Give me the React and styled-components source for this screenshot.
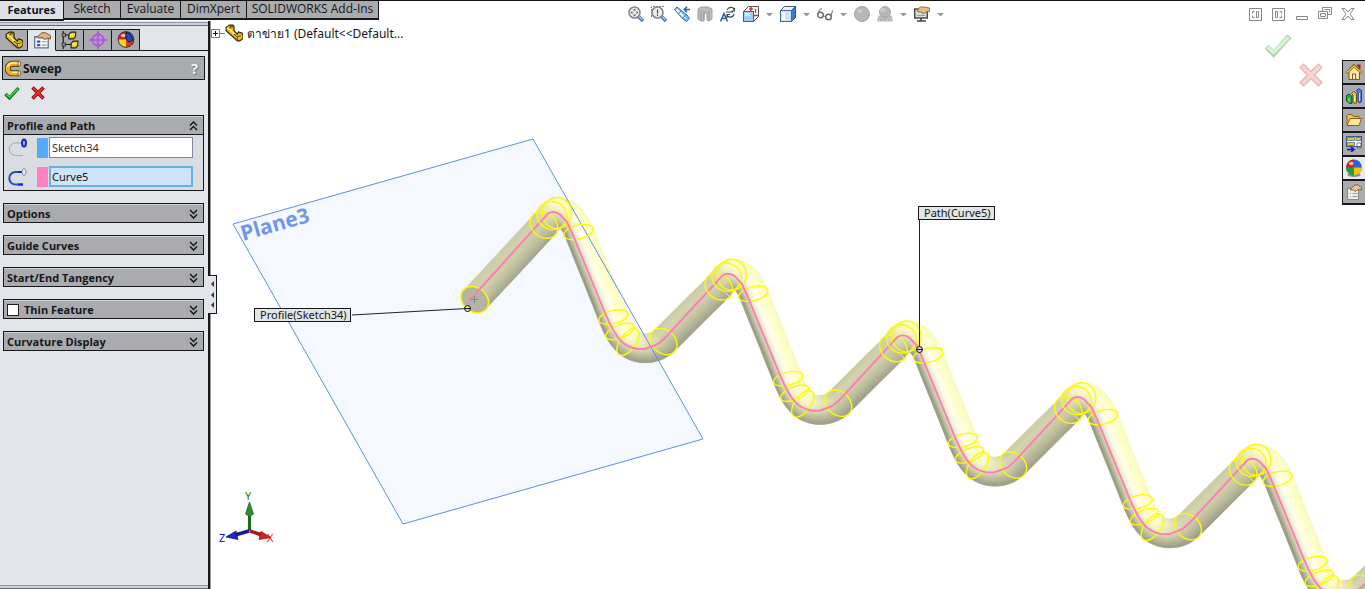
import React from "react";
import styled, { createGlobalStyle, css } from "styled-components";

const tabs = [
  { name: "Features", width: 64 },
  { name: "Sketch", width: 57 },
  { name: "Evaluate", width: 60 },
  { name: "DimXpert", width: 66 },
  { name: "SOLIDWORKS Add-Ins", width: 132 },
];

const groups = ["Options", "Guide Curves", "Start/End Tangency"];

/* ---------- icons ---------- */

const Icon = ({ size = 16, children, ...rest }) => (
  <svg width={size} height={size} viewBox="0 0 16 16" fill="none" aria-hidden="true" {...rest}>
    {children}
  </svg>
);

const PartIcon = () => (
  <Icon size={18}>
    <path d="M1 3l3-2h3l1 1v4l3 3 1-2 3 1 1 2v3l-3 2h-2L1 6z" fill="#e8b818" stroke="#2a2200" strokeWidth="1" />
    <path d="M2 3.500l2 1 7 7.500 2-1" stroke="#fff3a0" strokeWidth="1.200" />
    <path d="M4 4l1-1.500h2M8 9l3 2.500 3-1M11 12v2" stroke="#5a4600" />
  </Icon>
);

const PropertyIcon = () => (
  <Icon size={18}>
    <rect x="1.500" y="5" width="12" height="10" fill="#f4f6fb" stroke="#54688c" />
    <path d="M2 6h11" stroke="#7d9bd0" />
    <path d="M4 9h2v1H4zM4 12h2v1H4z" stroke="#3d5d9a" />
    <path d="M8 9.500h4M8 12.500h4" stroke="#8a94a8" />
    <path d="M4 5l4-3.500h3L15.500 4v3L13 6.500 10 7.500 9 6H5z" fill="#e2b184" stroke="#7c4a20" strokeWidth=".8" />
  </Icon>
);

const ConfigIcon = () => (
  <Icon size={18}>
    <path d="M2 0v16M2 3.500h5M2 12h7" stroke="#111" />
    <path d="M1 2h3v3H1zM1 10.500h3v3H1z" fill="#888" stroke="#222" strokeWidth=".6" />
    <path d="M7 3l2-2h4v4l-2 2H7zM9 11l2-2h4v4l-2 2H9z" fill="#f0d020" stroke="#222" />
    <path d="M8 3.500h3M10 11.500h3" stroke="#fff8b0" />
  </Icon>
);

const TargetIcon = () => (
  <Icon size={18}>
    <circle cx="8" cy="8" r="5" stroke="#b44be0" strokeWidth="1.400" />
    <path d="M8 0v16M0 8h16" stroke="#b44be0" strokeWidth="1.400" />
    <circle cx="8" cy="8" r="2" stroke="#c86cf0" />
  </Icon>
);

const BallIcon = ({ plain }) => (
  <Icon size={18}>
    {plain && <ellipse cx="8" cy="14" rx="6" ry="2" fill="#8c8c8c" />}
    <circle cx="8" cy="7.500" r="7" fill="#2e63d4" />
    <path d="M8 7.500V.5A7 7 0 0 0 1 7.500z" fill="#e02020" />
    <path d="M8 7.500H1a7 7 0 0 0 7 7z" fill={plain ? "#1f9e3a" : "#f4d415"} />
    <path d="M8 7.500h7a7 7 0 0 1-7 7z" fill={plain ? "#f4c415" : "#d43a20"} />
    {!plain && <path d="M8 1l4 2 2 5-3 2-3-3z" fill="#2448b4" stroke="#111" strokeWidth=".7" />}
    {!plain && <circle cx="8" cy="7.500" r="7" stroke="#222" strokeWidth=".7" />}
    <ellipse cx="5.500" cy="4" rx="2" ry="1.500" fill="#ffffff" opacity=".7" />
  </Icon>
);

const SweepIcon = () => (
  <Icon size={17}>
    <path d="M13 3.500H7a4.500 4.500 0 0 0 0 9h6" stroke="#4a3200" strokeWidth="5.600" />
    <path d="M13 3.500H7a4.500 4.500 0 0 0 0 9h6" stroke="#f0b020" strokeWidth="4" />
    <path d="M12 2.800H7A5 5 0 0 0 2.500 6.500M6.500 11.500h6" stroke="#fff0a0" strokeWidth="1.300" />
    <ellipse cx="13.500" cy="3.500" rx="1.300" ry="2.300" fill="#ffe27a" stroke="#4a3200" strokeWidth=".6" />
    <ellipse cx="13.500" cy="12.500" rx="1.300" ry="2.300" fill="#ffe27a" stroke="#4a3200" strokeWidth=".6" />
  </Icon>
);

const CheckIcon = ({ size = 16, faded }) => (
  <Icon size={size} opacity={faded ? 0.4 : 1}>
    <path d="M1.500 9l4 4L14.500 3" stroke={faded ? "#4c8a4c" : "#0b5c12"} strokeWidth="3.200" />
    <path d="M2 9.300l3.500 3L14 3.500" stroke={faded ? "#8df08d" : "#2cd436"} strokeWidth="1.800" />
  </Icon>
);

const CrossIcon = ({ size = 16, faded }) => (
  <Icon size={size} opacity={faded ? 0.4 : 1}>
    <path d="M2.500 2.500l11 11M13.500 2.500l-11 11" stroke={faded ? "#b05050" : "#7c0c0c"} strokeWidth="3.600" />
    <path d="M3 3l10 10M13 3L3 13" stroke={faded ? "#ff9090" : "#ee2a2a"} strokeWidth="2" />
  </Icon>
);

const ProfileIcon = ({ path }) => (
  <svg width="20" height="20" viewBox="0 0 20 20" fill="none" aria-hidden="true">
    <path
      d="M15 5H7.500a6 6 0 0 0 0 12.500H15"
      stroke={path ? "#2a52a8" : "#a9abb0"}
      strokeWidth={path ? 2 : 1}
    />
    {path && <path d="M10 5h5M10 17.500h5" stroke="#1522d8" strokeWidth="2" />}
    <ellipse
      cx="16"
      cy="5"
      rx="2"
      ry="3.500"
      fill={path ? "#e8eaf0" : "#aab4f0"}
      stroke={path ? "#8a8c92" : "#1e2ca8"}
      strokeWidth={path ? 1 : 2}
    />
  </svg>
);

const Chevrons = ({ up }) => (
  <svg width="9" height="10" viewBox="0 0 9 10" fill="none" aria-hidden="true">
    <path
      d={up ? "M1 4.500L4.500 1 8 4.500M1 9l3.500-3.500L8 9" : "M1 1l3.500 3.500L8 1M1 5.500L4.500 9 8 5.500"}
      stroke="#111"
      strokeWidth="1.300"
    />
  </svg>
);

const ZoomFitIcon = ({ area }) => (
  <Icon>
    {area && <path d="M.5 11V.5h13" stroke="#777" strokeDasharray="2 1" />}
    <path d="M10.500 10.500l4.500 4.500" stroke="#3f78b8" strokeWidth="3.400" />
    <path d="M11 10.500l3.500 3.500" stroke="#9fd0ff" strokeWidth="1.200" />
    <circle cx="6.500" cy="6.500" r="5.500" fill="#eceef2" stroke="#85878d" strokeWidth="1.600" />
    {area ? (
      <path d="M6.500 3.500v4M6.500 8.500V10" stroke="#444" strokeWidth="1.200" />
    ) : (
      <path d="M6.500 2.500l1.600 2H4.900zM6.500 10.500l1.600-2H4.900zM2.500 6.500l2-1.600v3.200zM10.500 6.500l-2-1.600v3.200z" fill="#555" />
    )}
  </Icon>
);

const PreviousViewIcon = () => (
  <Icon>
    <path d="M.5 3.500L3 1l10 8 2.500 3.500-3 3L9 13z" fill="#7cbcf4" stroke="#3a70ac" />
    <path d="M2.500 3.500l8.500 8.500" stroke="#f0f8ff" strokeWidth="2" />
    <path d="M4.500 7.500l3-3M8.500 12.500l3.500-4" stroke="#3a70ac" />
    <path d="M16 3.500h-5M13 .8L10.300 3.500 13 6.200" stroke="#2a62b4" strokeWidth="1.600" />
  </Icon>
);

const SectionIcon = () => (
  <Icon>
    <path d="M1 3l3-2h7l4 2v10l-3 2-2-1V7H7v8H4l-3-2z" fill="#bdbdbd" stroke="#a2a2a2" />
    <path d="M4 4v11M7 5v9M12 5v10" stroke="#989898" />
  </Icon>
);

const DynamicViewIcon = () => (
  <Icon>
    <path d="M.5 15.500L4 7.500l3.500 8M2 12.500h4" stroke="#2860b8" strokeWidth="1.600" />
    <path d="M7 4c2-4 7-3 7 0M14.500 2v3h-3M14 8c-1 4-6 4-7 1M7 12V8.500h3M6 6h7" stroke="#444" strokeWidth="1.100" />
  </Icon>
);

const OrientationIcon = () => (
  <Icon>
    <path d="M.5 5.500l5-5h10v10l-5 5" fill="#f8f8f8" stroke="#555" />
    <rect x=".5" y="5.500" width="10" height="10" fill="#9ecdf8" stroke="#2f64a8" />
    <path d="M2 7h5v3H2z" fill="#d2e9ff" />
    <path d="M8 1v4M12.500 3v4M11 9.500h4M6 3h4" stroke="#d83030" strokeWidth="1.300" />
  </Icon>
);

const DisplayIcon = () => (
  <Icon>
    <path d="M.5 4.500l4-4h11v11l-4 4H.5z" fill="#e8f3ff" stroke="#4a5c7c" />
    <path d="M11.500 4.500l4-4v11l-4 4z" fill="#3c7cd0" stroke="#2a4c88" />
    <path d="M.5 4.500h11v11H.5z" fill="#cfe4fc" stroke="#3c68ac" />
    <path d="M2 6h3v8H2z" fill="#fff" />
  </Icon>
);

const GlassesIcon = () => (
  <Icon>
    <circle cx="3.500" cy="9" r="2.800" stroke="#666" strokeWidth="1.400" />
    <circle cx="11.500" cy="11" r="2.800" stroke="#666" strokeWidth="1.400" />
    <path d="M6 10l3 .5M1 7.500C2 4 3 3 5 2.500M14 9.500c1-3 1-4 2-5" stroke="#777" strokeWidth="1.200" />
  </Icon>
);

const GrayBallIcon = ({ scene }) => (
  <Icon>
    {scene && <path d="M1.500 9.500h13l1.500 6H0z" fill="#b4b4b4" />}
    {scene && <path d="M2 11.500h12M1 14h14" stroke="#d4d4d4" strokeDasharray="2 2" />}
    <circle cx="8" cy={scene ? 6 : 8} r={scene ? 5.500 : 7.500} fill="#b6b6b6" stroke="#a6a6a6" />
    <ellipse cx="6" cy={scene ? 4 : 5} rx="3" ry="2" fill="#c8c8c8" />
  </Icon>
);

const MonitorIcon = () => (
  <Icon>
    <rect x=".7" y="3" width="12.600" height="9" fill="#d8dee8" stroke="#444" strokeWidth="1.400" />
    <path d="M3 9.500h8" stroke="#8aa0c0" />
    <path d="M3 15h9M7 12v3" stroke="#444" strokeWidth="1.600" />
    <path d="M3 5l3-4h4l5.500 1v3.500L12 6l-3 2-1-2H4z" fill="#e8bc84" stroke="#8a5a24" strokeWidth=".8" />
  </Icon>
);

const WindowIcon = ({ kind }) => (
  <svg width="14" height="14" viewBox="0 0 14 14" fill="none" stroke="#85878f" aria-hidden="true">
    {kind === "left" && <path d="M.5 1.500h12v12H.5zM5.500 4.500h-2v2M3.500 8.500v2h2M7.500 4.500h2v6h-2z" />}
    {kind === "right" && <path d="M.5 1.500h12v12H.5zM7.500 4.500h2v2M9.500 8.500v2h-2M3.500 4.500h2v6h-2z" />}
    {kind === "minimize" && <path d="M1.500 9.500h11v3h-11z" />}
    {kind === "restore" && <path d="M4.500 4V.5h9v7H10M.5 4.500h9v7h-9zM2.500 6.500h5v3h-5zM6.500 2.500h5v3" />}
    {kind === "close" && <path d="M1 1.500h3l3 3.500 3-3.500h3L9 7l4 5.500h-3L7 9l-3 3.500H1L5 7z" />}
  </svg>
);

const HomeIcon = () => (
  <Icon>
    <path d="M11 1.500h2.500V5" stroke="#b02020" strokeWidth="2" />
    <path d="M3 8v7.500h10.500V8L8 3z" fill="#ffe9a0" stroke="#7c5a10" />
    <path d="M.5 9L8 1.500 15.500 9" stroke="#8c6410" strokeWidth="2.600" />
    <path d="M1 8.500L8 2l7 6.500" stroke="#f4c53a" strokeWidth="1.200" />
    <path d="M6.500 10h3v5.500h-3z" fill="#fff8dc" stroke="#7c5a10" />
  </Icon>
);

const LibraryIcon = () => (
  <Icon>
    <path d="M.5 7.500L3 6l3 2.500v7H4L.5 13z" fill="#24b040" stroke="#0e5820" />
    <path d="M5.500 5.500l2-2 3 2V15l-1.500.5-2-1.500V7z" fill="#f0c830" stroke="#705008" />
    <path d="M10.500 2.500l2-2 3 2V13L14 15l-2-1.500V5z" fill="#4c82e0" stroke="#203c88" />
    <path d="M3 10v4M8.500 8v5M13.500 5v8" stroke="#fff" opacity=".7" />
  </Icon>
);

const FolderIcon = () => (
  <Icon>
    <path d="M1 13V3.500l1-1h4l1.500 2H13V7" fill="#f4c650" stroke="#8a6010" />
    <path d="M1 13.500L4 6.500h11.500L13 13.500z" fill="#ffe79a" stroke="#8a6010" />
  </Icon>
);

const PaletteIcon = () => (
  <Icon>
    <rect x=".5" y=".5" width="15" height="10" fill="#fff" stroke="#3a5a90" />
    <path d="M2 3h6M2 8h6M10 3h4" stroke="#f0cc10" strokeWidth="2.400" />
    <path d="M1.500 1.500h7v3h-7zM1.500 6.500h7v3h-7zM10 1.500h4.500v3H10zM11 7h4v5h-4z" stroke="#4c6488" strokeWidth=".8" />
    <path d="M1 13.500h6M5 11l3 2.500L5 16" stroke="#1010c8" strokeWidth="1.600" />
  </Icon>
);

const PropertiesIcon = () => (
  <Icon>
    <path d="M1.500 4.500h11v11h-11z" fill="#f0f0ea" stroke="#888" />
    <path d="M4 9.500h1M4 12.500h1M6.500 9.500h5M6.500 12.500h5" stroke="#999" />
    <path d="M4 6l4-4.500 3-1 4.500 3V6L12 5.500 9 7.500 8 6z" fill="#e8c49c" stroke="#7c5028" strokeWidth=".8" />
  </Icon>
);

const hudItems = [
  { label: "Zoom to Fit", icon: <ZoomFitIcon /> },
  { label: "Zoom to Area", icon: <ZoomFitIcon area /> },
  { label: "Previous View", icon: <PreviousViewIcon /> },
  { label: "Section View", icon: <SectionIcon /> },
  { label: "Dynamic Views", icon: <DynamicViewIcon /> },
  { label: "View Orientation", icon: <OrientationIcon />, menu: true },
  { label: "Display Style", icon: <DisplayIcon />, menu: true },
  { label: "Hide/Show Items", icon: <GlassesIcon />, menu: true },
  { label: "Edit Appearance", icon: <GrayBallIcon /> },
  { label: "Apply Scene", icon: <GrayBallIcon scene />, menu: true },
  { label: "View Settings", icon: <MonitorIcon />, menu: true },
];

const managerTabs = [
  { label: "FeatureManager", icon: <PartIcon /> },
  { label: "PropertyManager", icon: <PropertyIcon />, active: true },
  { label: "ConfigurationManager", icon: <ConfigIcon /> },
  { label: "DimXpertManager", icon: <TargetIcon /> },
  { label: "DisplayManager", icon: <BallIcon /> },
];

const taskTabs = [
  { label: "Resources", icon: <HomeIcon /> },
  { label: "Design Library", icon: <LibraryIcon /> },
  { label: "File Explorer", icon: <FolderIcon /> },
  { label: "View Palette", icon: <PaletteIcon /> },
  { label: "Appearances", icon: <BallIcon plain />, active: true },
  { label: "Custom Properties", icon: <PropertiesIcon /> },
];

/* ---------- swept tube ---------- */

const STEP_X = 174.8;
const STEP_Y = 61.7;
const RADIUS = 14.5;
const BANDS = 14;

// shades across the tube, from the left hand side of travel to the right
const RAMPS = {
  rise: ["#cbcba8", "#d0d0aa", "#cdcda8", "#bdbd9c", "#a3a38c"],
  peak: ["#f8f8c6", "#fdfdca", "#efefc0", "#cfcfa8", "#adad92"],
  fall: ["#f8f8c0", "#ffffc8", "#fffff0", "#dfdfb8", "#90907e"],
  turn: ["#f8f8c2", "#ffffcc", "#f4f4c4", "#c8c8a2", "#9c9c88"],
  low: ["#c8c8a2", "#d4d4ae", "#cbcba6", "#b4b496", "#9a9a86"],
};

const wave = [
  { p: [544, 225], c: [[549, 219], [553, 212], [558, 212]], from: "rise", to: "peak", n: 12 },
  { p: [558, 212], c: [[567, 212], [574, 220], [579, 232]], from: "peak", to: "fall", n: 14 },
  { p: [579, 232], c: [[590, 260], [602, 289], [613, 317]], from: "fall", to: "fall", n: 4 },
  { p: [613, 317], c: [[617, 327], [621, 336], [628, 342]], from: "fall", to: "turn", n: 8 },
  { p: [628, 342], c: [[638, 351], [655, 350], [664, 341]], from: "turn", to: "low", n: 14 },
  { p: [664, 341], c: [[682, 323], [700, 305], [718.8, 286.7]], from: "low", to: "rise", n: 6 },
];

const lead = [{ p: [474.7, 299.7], c: [[498, 275], [521, 250], [544, 225]], from: "rise", to: "rise", n: 2 }];

const rgb = (hex) => [1, 3, 5].map((i) => parseInt(hex.slice(i, i + 2), 16));
const mix = (a, b, t) => a.map((v, i) => v + (b[i] - v) * t);

const rampAt = (name, t) => {
  const ramp = RAMPS[name];
  const pos = t * (ramp.length - 1);
  const i = Math.min(Math.floor(pos), ramp.length - 2);
  return mix(rgb(ramp[i]), rgb(ramp[i + 1]), pos - i);
};

const curveAt = ({ p, c }, t) => {
  const pts = [p, ...c];
  const u = 1 - t;
  const w = [u * u * u, 3 * u * u * t, 3 * u * t * t, t * t * t];
  const d = [-3 * u * u, 3 * u * u - 6 * u * t, 6 * u * t - 3 * t * t, 3 * t * t];
  const sum = (k, axis) => k.reduce((acc, v, i) => acc + v * pts[i][axis], 0);
  const dx = sum(d, 0);
  const dy = sum(d, 1);
  const len = Math.hypot(dx, dy);
  return { x: sum(w, 0), y: sum(w, 1), nx: dy / len, ny: -dx / len };
};

const buildTube = (pieces) => {
  const quads = [];
  pieces.forEach((piece) => {
    for (let i = 0; i < piece.n; i++) {
      const a = curveAt(piece, i / piece.n);
      const b = curveAt(piece, (i + 1) / piece.n);
      const blend = (i + 0.5) / piece.n;
      for (let j = 0; j < BANDS; j++) {
        const t = (j + 0.5) / BANDS;
        const r0 = RADIUS * (1 - (2 * j) / BANDS);
        const r1 = RADIUS * (1 - (2 * (j + 1)) / BANDS);
        const color = mix(rampAt(piece.from, t), rampAt(piece.to, t), blend).map(Math.round);
        const at = (s, r) => `${(s.x + s.nx * r).toFixed(1)},${(s.y + s.ny * r).toFixed(1)}`;
        quads.push({
          points: [at(a, r0), at(b, r0), at(b, r1), at(a, r1)].join(" "),
          color: `rgb(${color.join(",")})`,
        });
      }
    }
  });
  return quads;
};

const rings = [
  [544, 225, 15, 12, 40],
  [552, 215.5, 15, 14, 20],
  [557, 213, 14.5, 15.5, 0],
  [578.5, 232, 15, 7, -14],
  [613.5, 317, 15, 6.5, -14],
  [620, 331.5, 15, 6.5, -22],
  [628, 342, 15.5, 8, -54],
  [663.5, 341.5, 15, 11.5, 42],
];

const Tube = ({ pieces }) =>
  buildTube(pieces).map((q, i) => (
    <polygon key={i} points={q.points} fill={q.color} stroke={q.color} strokeWidth=".8" />
  ));

const copies = [0, 1, 2, 3, 4];

const Scene = () => (
  <SceneSvg aria-hidden="true">
    <defs>
      <g id="tube">
        <Tube pieces={wave} />
      </g>
      <g id="marks" fill="none">
        {rings.map(([cx, cy, rx, ry, turn]) => (
          <ellipse
            key={cx}
            cx={cx}
            cy={cy}
            rx={rx}
            ry={ry}
            transform={`rotate(${turn} ${cx} ${cy})`}
            stroke="#fdfb00"
            strokeWidth="1.400"
          />
        ))}
        <path
          d="M543 219L548 213.500Q554 210 560 214.500L567 222 573 235 605 313Q614 334 621 341 627 347 637 349H645L658 344 664 339 717.800 280.700"
          stroke="#ff7bb8"
          strokeWidth="1.900"
        />
      </g>
    </defs>
    {/* the viewport starts right of the panel and below the tabs */}
    <g transform="translate(-210 -21)">
      <polygon points="233,224 533,139 703,439 403,524" fill="#f5f8ff" />
      <PlaneName x="243" y="241" transform="rotate(-16 243 241)">
        Plane3
      </PlaneName>
      <Tube pieces={lead} />
      <ellipse cx="474.700" cy="299.700" rx="15" ry="12" transform="rotate(40 474.700 299.700)" fill="#b4b4a0" />
      {copies.map((k) => (
        <use key={k} href="#tube" x={k * STEP_X} y={k * STEP_Y} />
      ))}
      <polygon points="233,224 533,139 703,439 403,524" fill="none" stroke="#5c8cf0" />
      <ellipse
        cx="474.700"
        cy="299.700"
        rx="15"
        ry="12"
        transform="rotate(40 474.700 299.700)"
        fill="none"
        stroke="#fdfb00"
        strokeWidth="1.500"
      />
      <path d="M469 301L543 219" stroke="#ff7bb8" strokeWidth="1.900" />
      {copies.map((k) => (
        <use key={k} href="#marks" x={k * STEP_X} y={k * STEP_Y} />
      ))}
      <path d="M471 299.500h7M474.500 296v7" stroke="#5a94a4" />
      <path d="M352 315L467 308.500M919.500 220V349" stroke="#222" />
      <g stroke="#111" fill="#d8d8d8">
        <circle cx="467.500" cy="308.500" r="3" />
        <circle cx="919.500" cy="349.500" r="3" />
        <path d="M465 308.500h5M917 349.500h5" />
      </g>
      <path d="M249.500 531v-16" stroke="#1c6c1c" strokeWidth="3" />
      <path d="M249.500 502l4 12-4 2.500-4-2.500z" fill="#2f8f2f" stroke="#155015" strokeWidth=".7" />
      <path d="M250 531l12 4" stroke="#b01818" strokeWidth="3.500" />
      <path d="M271 537.500l-12 2 2-8z" fill="#d82020" stroke="#801010" strokeWidth=".7" />
      <path d="M249 531l-14 4" stroke="#1818a8" strokeWidth="3.500" />
      <path d="M226 537l10-6 2 8.500z" fill="#2424cc" stroke="#101070" strokeWidth=".7" />
      <AxisName x="245" y="500" fill="#128012">Y</AxisName>
      <AxisName x="267" y="542" fill="#f01818">X</AxisName>
      <AxisName x="219" y="542" fill="#1010e0">Z</AxisName>
    </g>
  </SceneSvg>
);

const Group = ({ title, check }) => (
  <GroupBox>
    <GroupHead>
      {check ? (
        <CheckLabel>
          <input type="checkbox" />
          {title}
        </CheckLabel>
      ) : (
        <span>{title}</span>
      )}
      <PlainButton aria-label={`Expand ${title}`}>
        <Chevrons />
      </PlainButton>
    </GroupHead>
  </GroupBox>
);

const App = () => {
  return (
    <Page>
      <GlobalStyle />
      <Header>
        <TabBar>
          {tabs.map((tab, i) => (
            <Tab key={tab.name} $width={tab.width} $active={i === 0}>
              {tab.name}
            </Tab>
          ))}
        </TabBar>
        <Hud>
          {hudItems.map((item) => (
            <React.Fragment key={item.label}>
              <PlainButton aria-label={item.label}>{item.icon}</PlainButton>
              {item.menu && (
                <PlainButton aria-label={`${item.label} menu`}>
                  <Caret />
                </PlainButton>
              )}
            </React.Fragment>
          ))}
        </Hud>
        <WindowButtons>
          {["left", "right", "minimize", "restore", "close"].map((kind) => (
            <PlainButton key={kind} aria-label={kind}>
              <WindowIcon kind={kind} />
            </PlainButton>
          ))}
        </WindowButtons>
      </Header>
      <Body>
        <Panel>
          <Rule />
          <ManagerTabs>
            {managerTabs.map((tab) => (
              <ManagerTab key={tab.label} aria-label={tab.label} $active={tab.active}>
                {tab.icon}
              </ManagerTab>
            ))}
          </ManagerTabs>
          <Title>
            <SweepIcon />
            <h1>Sweep</h1>
            <HelpButton aria-label="Help">?</HelpButton>
          </Title>
          <Actions>
            <PlainButton aria-label="OK">
              <CheckIcon />
            </PlainButton>
            <PlainButton aria-label="Cancel">
              <CrossIcon />
            </PlainButton>
          </Actions>
          <Groups>
            <GroupBox>
              <GroupHead>
                <span>Profile and Path</span>
                <PlainButton aria-label="Collapse Profile and Path">
                  <Chevrons up />
                </PlainButton>
              </GroupHead>
              <Fields>
                <Field>
                  <ProfileIcon />
                  <Swatch $color="#55aaff" />
                  <input aria-label="Profile" defaultValue="Sketch34" />
                </Field>
                <Field $active>
                  <ProfileIcon path />
                  <Swatch $color="#ff80c0" />
                  <input aria-label="Path" defaultValue="Curve5" />
                </Field>
              </Fields>
            </GroupBox>
            {groups.map((title) => (
              <Group key={title} title={title} />
            ))}
            <Group title="Thin Feature" check />
            <Group title="Curvature Display" />
          </Groups>
          <Rule $bottom />
          <Splitter aria-label="Collapse panel">
            <i />
            <i />
            <i />
          </Splitter>
        </Panel>
        <Viewport>
          <Scene />
          <Callout $left={44} $top={287}>Profile(Sketch34)</Callout>
          <Callout $left={708} $top={185}>Path(Curve5)</Callout>
          <Tree>
            <PlainButton aria-label="Expand tree">
              <svg width="14" height="9" viewBox="0 0 14 9" fill="none" aria-hidden="true">
                <path d="M.5.5h8v8h-8zM9 4.500h5" stroke="#777" />
                <path d="M2 4.500h5M4.500 2v5" stroke="#111" />
              </svg>
            </PlainButton>
            <PartIcon />
            <TreeName>ตาข่าย1 (Default&lt;&lt;Default...</TreeName>
          </Tree>
          <Confirm>
            <PlainButton aria-label="Accept">
              <CheckIcon size={28} faded />
            </PlainButton>
            <PlainButton aria-label="Discard">
              <CrossIcon size={28} faded />
            </PlainButton>
          </Confirm>
          <TaskPane>
            {taskTabs.map((tab) => (
              <TaskTab key={tab.label} aria-label={tab.label} $active={tab.active}>
                {tab.icon}
              </TaskTab>
            ))}
          </TaskPane>
        </Viewport>
      </Body>
    </Page>
  );
};

export default App;

const GlobalStyle = createGlobalStyle`
  * {
    box-sizing: border-box;
  }

  body {
    margin: 0;
    background: #fff;
  }

  body, button, input {
    font-family: "Noto Sans", "Open Sans", sans-serif;
    font-size: 12px;
    color: #16161a;
  }

  svg {
    display: block;
    flex: none;
  }
`;

const Page = styled.div`
  display: flex;
  flex-direction: column;
  height: 100vh;
  overflow: hidden;
`;

const Header = styled.header`
  position: relative;
  z-index: 1;
  display: flex;
  height: 21px;
  border-top: 1px solid #111;
`;

const TabBar = styled.nav`
  display: flex;
  align-items: flex-start;
`;

const Tab = styled.button`
  width: ${({ $width }) => $width}px;
  height: ${({ $active }) => ($active ? 20 : 19)}px;
  padding: 0 0 2px;
  border: solid #18181c;
  border-width: 0 1px 2px 0;
  background: ${({ $active }) => ($active ? "#dde0e6" : "#a9abaf")};
  font-family: "Open Sans", sans-serif;
  font-size: ${({ $active }) => ($active ? 11 : 12)}px;
  font-weight: ${({ $active }) => ($active ? 700 : 400)};
  line-height: 15px;
  white-space: nowrap;
`;

const PlainButton = styled.button`
  display: flex;
  align-items: center;
  padding: 0;
  border: 0;
  background: none;
`;

const Hud = styled.div`
  display: flex;
  flex: 1;
  justify-content: center;
  align-items: center;
  gap: 7px;
  height: 26px;
  padding-right: 57px;
`;

const Caret = styled.span`
  width: 7px;
  border: solid transparent;
  border-width: 3px 3px 0;
  border-top-color: #96989c;
`;

const WindowButtons = styled.div`
  display: flex;
  align-items: center;
  gap: 9px;
  height: 26px;
  padding-right: 10px;
`;

const Body = styled.div`
  display: flex;
  flex: 1;
  min-height: 0;
`;

const Panel = styled.aside`
  position: relative;
  z-index: 1;
  display: flex;
  flex-direction: column;
  width: 210px;
  background: #e2e5e9;
  border-right: 2px solid #18181c;
  box-shadow: 1px 0 #9a9a9a;
`;

const Rule = styled.div`
  height: 4px;
  margin-top: ${({ $bottom }) => ($bottom ? "auto" : "1px")};
  border-top: 1px solid #9498ac;
  border-bottom: 1px solid #666a88;
  background: #cdd1da;
`;

const ManagerTabs = styled.div`
  display: flex;
  margin-top: 3px;
  background: linear-gradient(#18181c, #18181c) bottom / 100% 1px no-repeat;
`;

const ManagerTab = styled.button`
  display: flex;
  justify-content: center;
  align-items: center;
  width: 28px;
  height: 22px;
  padding: 0;
  border: 1px solid #18181c;
  border-left-width: 0;
  background: #a9abaf;

  ${({ $active }) =>
    $active &&
    css`
      background: #e2e5e9;
      border-bottom-color: #e2e5e9;
    `}
`;

const Title = styled.div`
  display: flex;
  align-items: center;
  gap: 1px;
  height: 24px;
  margin: 5px 3px 0 2px;
  padding: 0 6px 0 2px;
  border: 1px solid #18181c;
  background: #a9abaf;

  h1 {
    flex: 1;
    margin: 0;
    font: 700 12px "Open Sans", sans-serif;
  }
`;

const HelpButton = styled(PlainButton)`
  color: #f4f4f4;
  font-size: 14px;
  font-weight: 700;
  text-shadow: 1px 1px #777;
`;

const Actions = styled.div`
  display: flex;
  gap: 10px;
  margin: 5px 4px 14px;
  height: 16px;
`;

const Groups = styled.div`
  display: flex;
  flex-direction: column;
  gap: 12px;
  margin: 0 4px 0 3px;
`;

const GroupBox = styled.section`
  border: 1px solid #18181c;
  background: #d9dce1;
`;

const GroupHead = styled.h2`
  display: flex;
  justify-content: space-between;
  align-items: center;
  height: 18px;
  margin: 0;
  padding: 0 5px 0 3px;
  border-top: 1px solid #cfd1d4;
  background: #a9abaf;
  font: 700 11px "Open Sans", sans-serif;
`;

const CheckLabel = styled.label`
  display: flex;
  align-items: center;
  gap: 5px;

  input {
    appearance: none;
    width: 12px;
    height: 12px;
    margin: 0;
    border: 1px solid #222;
    background: #fff;
  }
`;

const Fields = styled.div`
  display: flex;
  flex-direction: column;
  gap: 8px;
  padding: 2px 10px 3px 4px;
  border-top: 1px solid #18181c;
`;

const Field = styled.div`
  display: flex;
  align-items: center;
  height: 21px;

  input {
    flex: 1;
    min-width: 0;
    height: 21px;
    padding: 0 2px;
    border: 1px solid #7f86a4;
    background: #fff;
    color: #33343c;
    font-size: 11px;

    ${({ $active }) =>
      $active &&
      css`
        border: 2px solid #62b2e8;
        padding: 0 1px;
        background: #cfe4f9;
        color: #111;
      `}
  }
`;

const Swatch = styled.span`
  width: 11px;
  height: 20px;
  margin: 0 1px 0 9px;
  background: ${({ $color }) => $color};
`;

const Splitter = styled.button`
  position: absolute;
  top: 254px;
  right: -9px;
  display: flex;
  flex-direction: column;
  justify-content: space-evenly;
  align-items: center;
  width: 9px;
  height: 39px;
  padding: 0;
  border: 1px solid #18181c;
  border-left: 0;
  background: #e2e5e9;

  i {
    border: solid transparent;
    border-width: 3px 3px 3px 0;
    border-right-color: #333;
  }
`;

const Viewport = styled.main`
  position: relative;
  display: flex;
  align-items: flex-start;
  flex: 1;
  min-width: 0;
  background: #fff;
`;

const SceneSvg = styled.svg`
  position: absolute;
  inset: 0;
  width: 100%;
  height: 100%;
`;

const PlaneName = styled.text`
  font: 700 21px "Open Sans", sans-serif;
  fill: #7096ea;
`;

const AxisName = styled.text`
  font: 11px "Noto Sans", sans-serif;
`;

const Callout = styled.div`
  position: absolute;
  left: ${({ $left }) => $left}px;
  top: ${({ $top }) => $top}px;
  padding: 0 3px 0 5px;
  border: 1px solid #18181c;
  background: #e2e5e5;
  font-size: 11px;
  line-height: 12px;
  white-space: nowrap;
`;

const Tree = styled.div`
  position: relative;
  display: flex;
  align-items: center;
  flex: 1;
  height: 18px;
  padding-left: 1px;
  margin-top: 3px;
  white-space: nowrap;
`;

const TreeName = styled.span`
  margin-left: 4px;
`;

const Confirm = styled.div`
  position: relative;
  display: flex;
  align-items: flex-start;
  gap: 5px;
  margin: 10px 17px 0 0;

  button:last-child {
    margin-top: 30px;
  }
`;

const TaskPane = styled.div`
  position: relative;
  margin-top: 39px;
  border-top: 1px solid #18181c;
`;

const TaskTab = styled.button`
  display: flex;
  justify-content: center;
  align-items: center;
  width: 23px;
  height: 24px;
  padding: 0;
  border: solid #18181c;
  border-width: 0 0 2px 1px;
  background: ${({ $active }) => ($active ? "#e8eaee" : "#a9abaf")};
`;
